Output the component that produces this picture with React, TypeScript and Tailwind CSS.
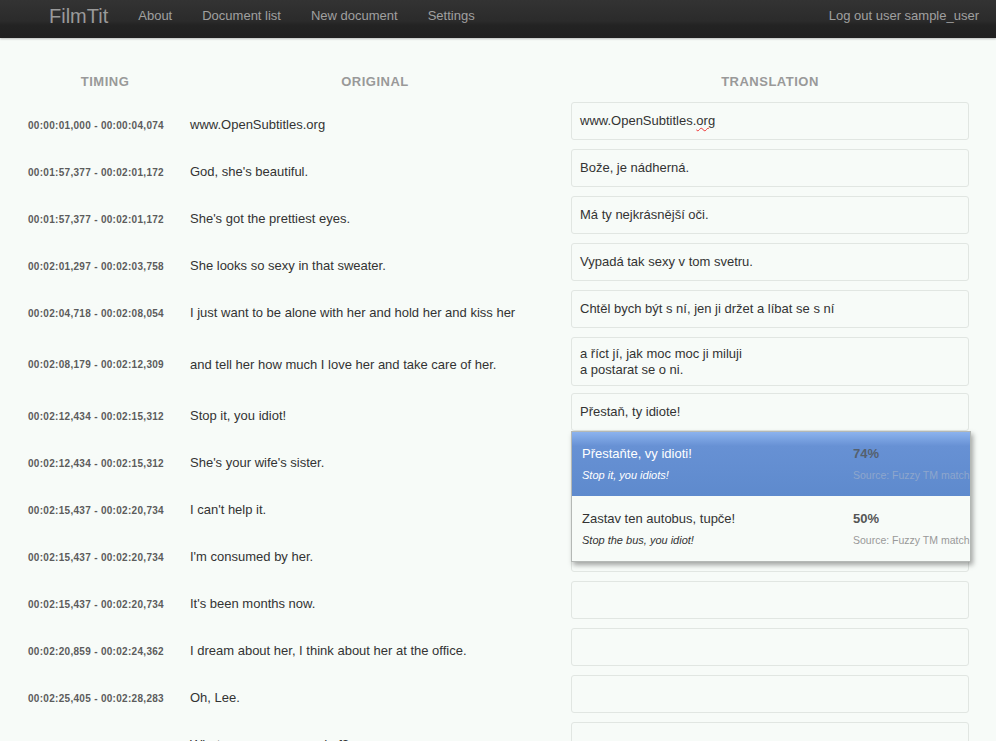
import React from "react";

type Row = { t: string; o: string; tr?: React.ReactNode; tall?: boolean };

const rows: Row[] = [
  {
    t: "00:00:01,000 - 00:00:04,074",
    o: "www.OpenSubtitles.org",
    tr: (
      <>
        www.OpenSubtitles.
        <span className="underline decoration-wavy decoration-[#e33] decoration-1 underline-offset-2">org</span>
      </>
    ),
  },
  { t: "00:01:57,377 - 00:02:01,172", o: "God, she's beautiful.", tr: "Bože, je nádherná." },
  { t: "00:01:57,377 - 00:02:01,172", o: "She's got the prettiest eyes.", tr: "Má ty nejkrásnější oči." },
  { t: "00:02:01,297 - 00:02:03,758", o: "She looks so sexy in that sweater.", tr: "Vypadá tak sexy v tom svetru." },
  {
    t: "00:02:04,718 - 00:02:08,054",
    o: "I just want to be alone with her and hold her and kiss her",
    tr: "Chtěl bych být s ní, jen ji držet a líbat se s ní",
  },
  {
    t: "00:02:08,179 - 00:02:12,309",
    o: "and tell her how much I love her and take care of her.",
    tr: (
      <>
        a říct jí, jak moc moc ji miluji
        <br />a postarat se o ni.
      </>
    ),
    tall: true,
  },
  { t: "00:02:12,434 - 00:02:15,312", o: "Stop it, you idiot!", tr: "Přestaň, ty idiote!" },
  { t: "00:02:12,434 - 00:02:15,312", o: "She's your wife's sister." },
  { t: "00:02:15,437 - 00:02:20,734", o: "I can't help it." },
  { t: "00:02:15,437 - 00:02:20,734", o: "I'm consumed by her." },
  { t: "00:02:15,437 - 00:02:20,734", o: "It's been months now." },
  { t: "00:02:20,859 - 00:02:24,362", o: "I dream about her, I think about her at the office." },
  { t: "00:02:25,405 - 00:02:28,283", o: "Oh, Lee." },
  { t: "00:02:25,405 - 00:02:28,283", o: "What are you so scared of?" },
];

function Popup() {
  return (
    <div className="absolute left-0 top-full z-10 w-[400px] overflow-hidden border border-[#b4b8b5] bg-[#f7fbf8] shadow-[2px_3px_5px_rgba(0,0,0,0.35)]">
      <div className="flex h-[64px] bg-[linear-gradient(#8cb3ee,#6791d4_22%,#5e8acd)]">
        <div className="w-[281px] shrink-0 pl-[10px] pt-[14px]">
          <div className="text-[13px] leading-[16px] text-white">Přestaňte, vy idioti!</div>
          <div className="mt-[7px] text-[11px] italic leading-[12px] text-white">Stop it, you idiots!</div>
        </div>
        <div className="pt-[14px] whitespace-nowrap">
          <div className="text-[13px] font-bold leading-[16px] text-[#55606e]">74%</div>
          <div className="mt-[7px] text-[10.5px] leading-[12px] text-[#8ea6cc]">Source: Fuzzy TM match</div>
        </div>
      </div>
      <div className="flex h-[65px]">
        <div className="w-[281px] shrink-0 pl-[10px] pt-[15px]">
          <div className="text-[13px] leading-[16px] text-[#333]">Zastav ten autobus, tupče!</div>
          <div className="mt-[7px] text-[11px] italic leading-[12px] text-[#333]">Stop the bus, you idiot!</div>
        </div>
        <div className="pt-[15px] whitespace-nowrap">
          <div className="text-[13px] font-bold leading-[16px] text-[#555]">50%</div>
          <div className="mt-[7px] text-[10.5px] leading-[12px] text-[#999]">Source: Fuzzy TM match</div>
        </div>
      </div>
    </div>
  );
}

export default function App() {
  return (
    <div
      className="h-[741px] w-[996px] overflow-hidden bg-[#f7fbf8]"
      style={{ fontFamily: '"Liberation Sans", Arial, sans-serif' }}
    >
      {/* navbar */}
      <div className="h-[38px] bg-[linear-gradient(#333_0%,#2b2b2b_55%,#232323_66%,#202020_100%)] shadow-[0_1px_2px_rgba(0,0,0,0.25)]">
        <div className="flex h-[32px] items-center pl-[49px] pr-[17px]">
          <span className="text-[20px] leading-none text-[#9a9a9a]">FilmTit</span>
          <div className="ml-[30px] flex gap-[30px] text-[13px] text-[#a0a0a0]">
            <span>About</span>
            <span>Document list</span>
            <span>New document</span>
            <span>Settings</span>
          </div>
          <span className="ml-auto text-[13px] text-[#a0a0a0]">Log out user sample_user</span>
        </div>
      </div>

      {/* table */}
      <div className="pl-[20px]">
        <div className="flex pt-[36px] pb-[8px] text-[13px] font-bold leading-[16px] tracking-[0.5px] text-[#999]">
          <div className="w-[170px] text-center">TIMING</div>
          <div className="w-[370px] text-center">ORIGINAL</div>
          <div className="ml-[11px] w-[398px] text-center">TRANSLATION</div>
        </div>

        {rows.map((r, i) => (
          <div key={i} className="flex">
            <div className="flex w-[170px] items-center pl-[8px] pt-[7px] text-[10px] font-bold tracking-[0.3px] text-[#5c5c5c]">
              {r.t}
            </div>
            <div className="flex w-[370px] items-center pt-[7px] text-[13px] text-[#333]">{r.o}</div>
            <div className={"ml-[11px] w-[398px] pt-[4px] " + (r.tall ? "pb-[3px]" : "pb-[5px]")}>
              <div className="relative">
                <div
                  className={
                    "flex items-center rounded-[3px] border border-[#e1e6e2] bg-[#f7fbf8] pl-[8px] text-[13px] leading-[16px] text-[#333] " +
                    (r.tall ? "h-[49px]" : "h-[38px]")
                  }
                >
                  <div>{r.tr}</div>
                </div>
                {i === 6 && <Popup />}
              </div>
            </div>
          </div>
        ))}
      </div>
    </div>
  );
}
